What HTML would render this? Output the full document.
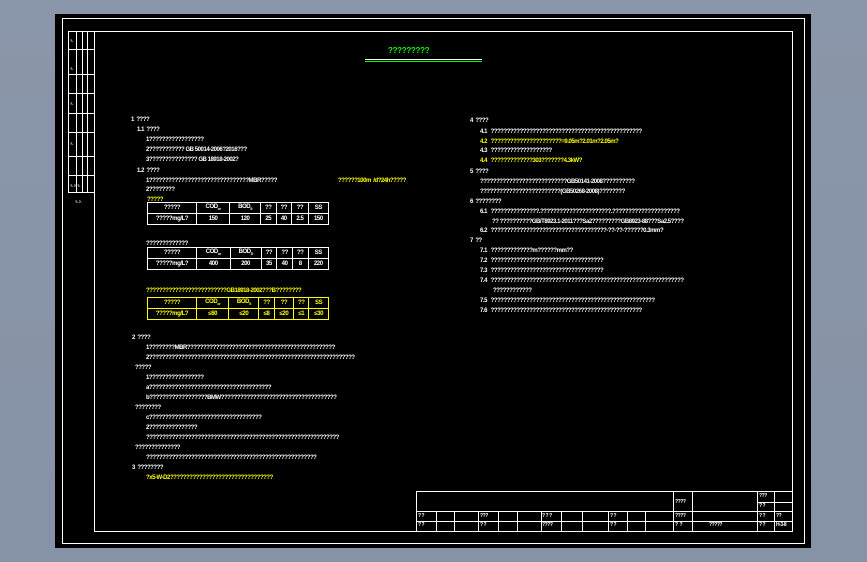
<!DOCTYPE html>
<html><head><meta charset="utf-8"><style>
*{margin:0;padding:0;box-sizing:border-box}
body{width:867px;height:562px;overflow:hidden;background:linear-gradient(#8a96a9,#8692a5);position:relative;font-family:"Liberation Sans","Noto Sans CJK SC",sans-serif}
.a{position:absolute}
.bl{background:#000}
.b{position:absolute;border:1px solid #fff}
.h{position:absolute;height:1px;background:#fff}
.v{position:absolute;width:1px;background:#fff}
.t{position:absolute;font-size:6px;letter-spacing:-0.45px;color:#fff;white-space:nowrap;line-height:7px;font-weight:bold;margin-top:2px}
.y{color:#ff0}
.g{color:#0f0}
table{position:absolute;border-collapse:collapse;font-size:6px;letter-spacing:-0.4px;font-weight:bold}
td{border:1px solid #fff;color:#fff;text-align:center;height:11px;padding:0;line-height:9px}
table.yt td{border-color:#ff0;color:#ff0}
</style></head><body>
<div class="a bl" style="left:55px;top:14px;width:756px;height:534px"></div>
<div class="b" style="left:62px;top:18px;width:743px;height:526px"></div>
<div class="b" style="left:94px;top:31px;width:699px;height:501px"></div>
<div class="b" style="left:68px;top:31px;width:27px;height:162px"></div>
<div class="v" style="left:76px;top:31px;height:162px"></div>
<div class="v" style="left:82px;top:31px;height:162px"></div>
<div class="v" style="left:87px;top:31px;height:162px"></div>
<div class="h" style="left:68px;top:49px;width:27px"></div>
<div class="h" style="left:68px;top:74px;width:27px"></div>
<div class="h" style="left:68px;top:93px;width:27px"></div>
<div class="h" style="left:68px;top:113px;width:27px"></div>
<div class="h" style="left:68px;top:132px;width:27px"></div>
<div class="h" style="left:68px;top:156px;width:27px"></div>
<div class="h" style="left:68px;top:175px;width:27px"></div>
<div class="t" style="left:70px;top:35px;font-size:4px">?-</div>
<div class="t" style="left:70px;top:63px;font-size:4px">?-</div>
<div class="t" style="left:70px;top:98px;font-size:4px">?-</div>
<div class="t" style="left:70px;top:138px;font-size:4px">?-</div>
<div class="t" style="left:70px;top:180px;font-size:4px">?- ?- ?-</div>
<div class="t" style="left:75px;top:196px;font-size:4px">?- ?-</div>
<div class="t g" style="left:388px;top:45px;font-size:8px;letter-spacing:-0.3px">?????????</div>
<div class="h" style="left:365px;top:59px;width:117px"></div>
<div class="h" style="left:365px;top:61px;width:117px;background:#0f0"></div>
<div class="t" style="left:131px;top:115px">1 &nbsp;????</div>
<div class="t" style="left:137px;top:125px">1.1 &nbsp;????</div>
<div class="t" style="left:146px;top:135px">1?????????????????</div>
<div class="t" style="left:146px;top:145px">2??????????? GB 50014-2006?2016???</div>
<div class="t" style="left:146px;top:155px">3??????????????? GB 18918-2002?</div>
<div class="t" style="left:137px;top:166px">1.2 &nbsp;????</div>
<div class="t" style="left:146px;top:176px">1???????????????????????????????MBR?????</div>
<div class="t y" style="left:338px;top:176px">??????100m &nbsp;/d?24h?????</div>
<div class="t" style="left:146px;top:185px">2????????</div>
<div class="t y" style="left:147px;top:195px">?????</div>
<table style="left:147px;top:202px;width:182px">
<tr><td style="width:49px">?????</td><td>COD<sub style="font-size:4px">cr</sub></td><td>BOD<sub style="font-size:4px">5</sub></td><td>??</td><td>??</td><td>??</td><td>SS</td></tr>
<tr><td>?????mg/L?</td><td>150</td><td>120</td><td>25</td><td>40</td><td>2.5</td><td>150</td></tr></table>
<div class="t" style="left:146px;top:239px">?????????????</div>
<table style="left:147px;top:247px;width:182px">
<tr><td style="width:49px">?????</td><td>COD<sub style="font-size:4px">cr</sub></td><td>BOD<sub style="font-size:4px">5</sub></td><td>??</td><td>??</td><td>??</td><td>SS</td></tr>
<tr><td>?????mg/L?</td><td>400</td><td>200</td><td>35</td><td>40</td><td>8</td><td>220</td></tr></table>
<div class="t y" style="left:146px;top:286px">?????????????????????????GB18918-2002???B????????</div>
<table class="yt" style="left:147px;top:297px;width:182px">
<tr><td style="width:49px">?????</td><td>COD<sub style="font-size:4px">cr</sub></td><td>BOD<sub style="font-size:4px">5</sub></td><td>??</td><td>??</td><td>??</td><td>SS</td></tr>
<tr><td>?????mg/L?</td><td>≤60</td><td>≤20</td><td>≤8</td><td>≤20</td><td>≤1</td><td>≤30</td></tr></table>
<div class="t" style="left:132px;top:333px">2 &nbsp;????</div>
<div class="t" style="left:146px;top:343px">1????????MBR??????????????????????????????????????????????</div>
<div class="t" style="left:146px;top:353px">2????????????????????????????????????????????????????????????????</div>
<div class="t" style="left:135px;top:363px">?????</div>
<div class="t" style="left:146px;top:373px">1?????????????????</div>
<div class="t" style="left:146px;top:383px">a??????????????????????????????????????</div>
<div class="t" style="left:146px;top:393px">b??????????????????BMW????????????????????????????????????</div>
<div class="t" style="left:135px;top:403px">????????</div>
<div class="t" style="left:146px;top:413px">c???????????????????????????????????</div>
<div class="t" style="left:146px;top:423px">2???????????????</div>
<div class="t" style="left:146px;top:433px">????????????????????????????????????????????????????????????</div>
<div class="t" style="left:135px;top:443px">??????????????</div>
<div class="t" style="left:146px;top:453px">?????????????????????????????????????????????????????</div>
<div class="t" style="left:132px;top:463px">3 &nbsp;????????</div>
<div class="t y" style="left:146px;top:473px">?x5-W-D2????????????????????????????????</div>
<div class="t" style="left:470px;top:116px">4 &nbsp;????</div>
<div class="t" style="left:480px;top:127px">4.1 &nbsp;&nbsp;???????????????????????????????????????????????</div>
<div class="t y" style="left:480px;top:137px">4.2 &nbsp;&nbsp;??????????????????????=9.05m?2.01m?2.05m?</div>
<div class="t" style="left:480px;top:146px">4.3 &nbsp;&nbsp;???????????????????</div>
<div class="t y" style="left:480px;top:156px">4.4 &nbsp;&nbsp;?????????????303???????4.3kW?</div>
<div class="t" style="left:470px;top:167px">5 &nbsp;????</div>
<div class="t" style="left:480px;top:177px">???????????????????????????GB50141-2008??????????</div>
<div class="t" style="left:480px;top:187px">?????????????????????????(GB50268-2008)????????</div>
<div class="t" style="left:470px;top:197px">6 &nbsp;????????</div>
<div class="t" style="left:480px;top:207px">6.1 &nbsp;&nbsp;???????????????.??????????????????????.?????????????????????</div>
<div class="t" style="left:492px;top:217px">?? ??????????GB/T8923.1-2011???Sa2?????????GB8923-88???Sa2.5????</div>
<div class="t" style="left:480px;top:226px">6.2 &nbsp;&nbsp;????????????????????????????????????-??-??-??????0.3mm?</div>
<div class="t" style="left:470px;top:236px">7 &nbsp;??</div>
<div class="t" style="left:480px;top:246px">7.1 &nbsp;&nbsp;?????????????m??????mm??</div>
<div class="t" style="left:480px;top:256px">7.2 &nbsp;&nbsp;???????????????????????????????????</div>
<div class="t" style="left:480px;top:266px">7.3 &nbsp;&nbsp;???????????????????????????????????</div>
<div class="t" style="left:480px;top:276px">7.4 &nbsp;&nbsp;????????????????????????????????????????????????????????????</div>
<div class="t" style="left:493px;top:286px">????????????</div>
<div class="t" style="left:480px;top:296px">7.5 &nbsp;&nbsp;???????????????????????????????????????????????????</div>
<div class="t" style="left:480px;top:306px">7.6 &nbsp;&nbsp;???????????????????????????????????????????????</div>
<div class="b" style="left:416px;top:491px;width:377px;height:41px"></div>
<div class="h" style="left:757px;top:502px;width:36px"></div>
<div class="h" style="left:416px;top:511px;width:377px"></div>
<div class="h" style="left:416px;top:521px;width:377px"></div>
<div class="v" style="left:673px;top:491px;height:40px"></div>
<div class="v" style="left:692px;top:491px;height:40px"></div>
<div class="v" style="left:757px;top:491px;height:40px"></div>
<div class="v" style="left:774px;top:491px;height:40px"></div>
<div class="v" style="left:436px;top:511px;height:20px"></div>
<div class="v" style="left:454px;top:511px;height:20px"></div>
<div class="v" style="left:478px;top:511px;height:20px"></div>
<div class="v" style="left:498px;top:511px;height:20px"></div>
<div class="v" style="left:517px;top:511px;height:20px"></div>
<div class="v" style="left:541px;top:511px;height:20px"></div>
<div class="v" style="left:561px;top:511px;height:20px"></div>
<div class="v" style="left:582px;top:511px;height:20px"></div>
<div class="v" style="left:608px;top:511px;height:20px"></div>
<div class="v" style="left:627px;top:511px;height:20px"></div>
<div class="v" style="left:645px;top:511px;height:20px"></div>
<div class="t" style="left:675px;top:497px;font-size:5px">????</div>
<div class="t" style="left:759px;top:491px;font-size:5px">???</div>
<div class="t" style="left:759px;top:501px;font-size:5px">? ?</div>
<div class="t" style="left:418px;top:511px;font-size:5px">? ?</div>
<div class="t" style="left:418px;top:520px;font-size:5px">? ?</div>
<div class="t" style="left:480px;top:511px;font-size:5px">???</div>
<div class="t" style="left:480px;top:520px;font-size:5px">? ?</div>
<div class="t" style="left:542px;top:511px;font-size:5px">? ? ?</div>
<div class="t" style="left:542px;top:520px;font-size:5px">????</div>
<div class="t" style="left:610px;top:511px;font-size:5px">? ?</div>
<div class="t" style="left:610px;top:520px;font-size:5px">? ?</div>
<div class="t" style="left:675px;top:511px;font-size:5px">????</div>
<div class="t" style="left:675px;top:520px;font-size:5px">? &nbsp;?</div>
<div class="t" style="left:709px;top:520px;font-size:5px">?????</div>
<div class="t" style="left:759px;top:511px;font-size:5px">? ?</div>
<div class="t" style="left:759px;top:520px;font-size:5px">? ?</div>
<div class="t" style="left:776px;top:511px;font-size:5px">??</div>
<div class="t" style="left:776px;top:520px;font-size:5px">H-3-8</div>
</body></html>
